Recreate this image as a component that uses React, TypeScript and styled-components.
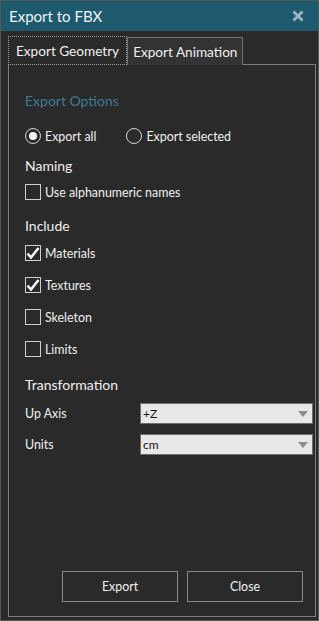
import React, { useState } from 'react';
import styled, { createGlobalStyle } from 'styled-components';

const GlobalStyle = createGlobalStyle`
    html, body {
        margin: 0;
        padding: 0;
        background: #2a2a2a;
    }
    * {
        box-sizing: border-box;
    }
`;

const Window = styled.div`
    width: 319px;
    height: 621px;
    display: flex;
    flex-direction: column;
    background: #2a2a2a;
    border: 1px solid #565656;
    font-family: Lato, 'Noto Sans', sans-serif;
    color: #f0f0f0;
`;

const TitleBar = styled.div`
    height: 30px;
    display: flex;
    align-items: center;
    justify-content: space-between;
    padding: 0 14px 0 8px;
    background: #1e5a6d;
`;

const Title = styled.span`
    font-size: 15px;
    color: #eef3f5;
`;

const CloseIcon = styled.svg`
    width: 12px;
    height: 12px;
`;

const TabRow = styled.div`
    display: flex;
    margin-top: 5px;
    padding-left: 7px;
    height: 29px;
`;

const Tab = styled.div<{ $active?: boolean }>`
    height: ${p => (p.$active ? '29px' : '28px')};
    margin-top: ${p => (p.$active ? '0' : '1px')};
    padding: 0 ${p => (p.$active ? '7px' : '5px')};
    display: flex;
    align-items: center;
    font-size: 13.6px;
    background: ${p => (p.$active ? '#2a2a2a' : '#333333')};
    border: 1px ${p => (p.$active ? 'dotted #a0a0a0' : 'solid #717171')};
    border-bottom: ${p => (p.$active ? '1px dotted #a0a0a0' : 'none')};
    position: relative;
    z-index: 1;
`;

const Panel = styled.div`
    flex: 1;
    margin: -1px 2px 3px 7px;
    border: 1px solid #7d7d7d;
    padding: 26px 2px 14px 16px;
    display: flex;
    flex-direction: column;
`;

const SectionTitle = styled.div<{ $top: number; $accent?: boolean }>`
    height: 20px;
    line-height: 20px;
    margin-top: ${p => p.$top}px;
    font-size: 14px;
    color: ${p => (p.$accent ? '#3c7b94' : '#f0f0f0')};
`;

const OptionRow = styled.div<{ $top: number }>`
    height: 16px;
    margin-top: ${p => p.$top}px;
    display: flex;
    align-items: center;
    gap: 30px;
`;

const Option = styled.label`
    display: flex;
    align-items: center;
    gap: 4px;
    font-size: 12.4px;
    cursor: pointer;
`;

const RadioCircle = styled.span<{ $on: boolean }>`
    width: 16px;
    height: 16px;
    border-radius: 50%;
    border: 1px solid #d6d6d6;
    display: flex;
    align-items: center;
    justify-content: center;

    &::after {
        content: '';
        width: 8px;
        height: 8px;
        border-radius: 50%;
        background: #f2f2f2;
        display: ${p => (p.$on ? 'block' : 'none')};
    }
`;

const Box = styled.span`
    width: 16px;
    height: 16px;
    border: 1px solid #cfcfcf;
    display: flex;
    align-items: center;
    justify-content: center;
`;

const FieldRow = styled.div<{ $top: number }>`
    height: 21px;
    margin-top: ${p => p.$top}px;
    display: flex;
    align-items: center;
`;

const FieldLabel = styled.span`
    width: 115px;
    font-size: 12.4px;
`;

const Combo = styled.div`
    width: 173px;
    height: 21px;
    display: flex;
    align-items: center;
    justify-content: space-between;
    padding: 0 4px 0 2px;
    background: #e8e8e8;
    border: 1px solid #6e6e6e;
    color: #111;
    font-size: 12px;
`;

const Arrow = styled.span`
    width: 0;
    height: 0;
    border-left: 5px solid transparent;
    border-right: 5px solid transparent;
    border-top: 6px solid #8c8c8c;
`;

const ButtonRow = styled.div`
    margin-top: auto;
    display: flex;
    justify-content: flex-end;
    gap: 9px;
    padding-right: 10px;
`;

const Button = styled.button`
    width: 116px;
    height: 31px;
    background: #2a2a2a;
    border: 1px solid #8a8a8a;
    color: #f0f0f0;
    font-family: Lato, 'Noto Sans', sans-serif;
    font-size: 12.4px;
    cursor: pointer;
`;

const Check = () => (
    <svg width="14" height="14" viewBox="0 0 14 14">
        <path d="M1.5 7.5 L5 11.5 L12.5 2" fill="none" stroke="#f4f4f4" strokeWidth="2.6" />
    </svg>
);

const CheckItem: React.FC<{ label: string; top: number; initial?: boolean }> = ({ label, top, initial }) => {
    const [on, setOn] = useState(!!initial);
    return (
        <OptionRow $top={top}>
            <Option onClick={() => setOn(!on)}>
                <Box>{on && <Check />}</Box>
                {label}
            </Option>
        </OptionRow>
    );
};

const App: React.FC = () => {
    const [mode, setMode] = useState('all');

    return (
        <Window>
            <GlobalStyle />
            <TitleBar>
                <Title>Export to FBX</Title>
                <CloseIcon viewBox="0 0 12 12">
                    <path d="M1.5 1.5 L10.5 10.5 M10.5 1.5 L1.5 10.5" stroke="#9db7c0" strokeWidth="2.6" />
                </CloseIcon>
            </TitleBar>
            <TabRow>
                <Tab $active>Export Geometry</Tab>
                <Tab>Export Animation</Tab>
            </TabRow>
            <Panel>
                <SectionTitle $top={0} $accent>Export Options</SectionTitle>
                <OptionRow $top={17}>
                    <Option onClick={() => setMode('all')}>
                        <RadioCircle $on={mode === 'all'} />
                        Export all
                    </Option>
                    <Option onClick={() => setMode('selected')}>
                        <RadioCircle $on={mode === 'selected'} />
                        Export selected
                    </Option>
                </OptionRow>
                <SectionTitle $top={12}>Naming</SectionTitle>
                <CheckItem label="Use alphanumeric names" top={8} />
                <SectionTitle $top={16}>Include</SectionTitle>
                <CheckItem label="Materials" top={9} initial />
                <CheckItem label="Textures" top={16} initial />
                <CheckItem label="Skeleton" top={16} />
                <CheckItem label="Limits" top={16} />
                <SectionTitle $top={18}>Transformation</SectionTitle>
                <FieldRow $top={8}>
                    <FieldLabel>Up Axis</FieldLabel>
                    <Combo>+Z<Arrow /></Combo>
                </FieldRow>
                <FieldRow $top={10}>
                    <FieldLabel>Units</FieldLabel>
                    <Combo>cm<Arrow /></Combo>
                </FieldRow>
                <ButtonRow>
                    <Button>Export</Button>
                    <Button>Close</Button>
                </ButtonRow>
            </Panel>
        </Window>
    );
};

export default App;
